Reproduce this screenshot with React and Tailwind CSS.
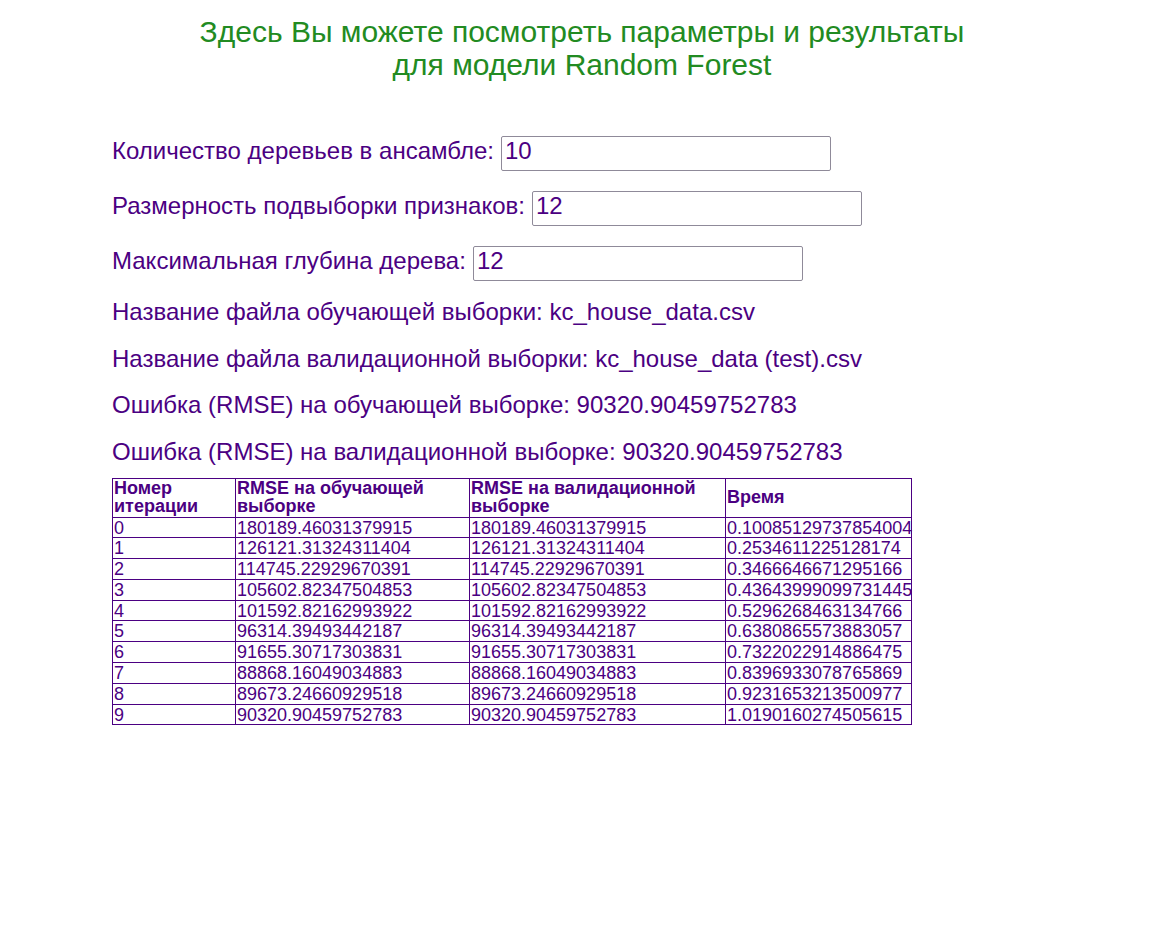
import React from "react";

const rows = [
  ["0", "180189.46031379915", "180189.46031379915", "0.10085129737854004"],
  ["1", "126121.31324311404", "126121.31324311404", "0.2534611225128174"],
  ["2", "114745.22929670391", "114745.22929670391", "0.3466646671295166"],
  ["3", "105602.82347504853", "105602.82347504853", "0.43643999099731445"],
  ["4", "101592.82162993922", "101592.82162993922", "0.5296268463134766"],
  ["5", "96314.39493442187", "96314.39493442187", "0.6380865573883057"],
  ["6", "91655.30717303831", "91655.30717303831", "0.7322022914886475"],
  ["7", "88868.16049034883", "88868.16049034883", "0.8396933078765869"],
  ["8", "89673.24660929518", "89673.24660929518", "0.9231653213500977"],
  ["9", "90320.90459752783", "90320.90459752783", "1.0190160274505615"],
];

function ParamRow({ label, value, mt }) {
  return (
    <div className={"flex items-center h-[35px] " + mt}>
      <span className="leading-[28px] pb-[4px]">{label}</span>
      <input
        type="text"
        defaultValue={value}
        className="ml-[7px] w-[330px] h-[35px] px-[3px] pb-[4px] border border-[#8f8a99] rounded-[2px] text-[24px] text-[#4b0082] bg-white outline-none"
      />
    </div>
  );
}

export default function App() {
  return (
    <div className="min-h-screen bg-white font-['Liberation_Sans',Arial,sans-serif] text-[#4b0082]">
      <h1 className="pt-[14.5px] text-center text-[30px] leading-[33.5px] text-[#228b22] font-normal">
        Здесь Вы можете посмотреть параметры и результаты
        <br />
        для модели Random Forest
      </h1>

      <div className="pl-[112px] text-[24px]">
        <ParamRow label="Количество деревьев в ансамбле:" value="10" mt="mt-[54px]" />
        <ParamRow label="Размерность подвыборки признаков:" value="12" mt="mt-[20px]" />
        <ParamRow label="Максимальная глубина дерева:" value="12" mt="mt-[20px]" />

        <p className="mt-[17.5px] leading-[28px]">Название файла обучающей выборки: kc_house_data.csv</p>
        <p className="mt-[18.5px] leading-[28px]">Название файла валидационной выборки: kc_house_data (test).csv</p>
        <p className="mt-[18.5px] leading-[28px]">Ошибка (RMSE) на обучающей выборке: 90320.90459752783</p>
        <p className="mt-[18.5px] leading-[28px]">Ошибка (RMSE) на валидационной выборке: 90320.90459752783</p>

        <table className="mt-[12px] w-[799px] table-fixed border-collapse border border-[#4b0082] text-[18px] leading-[18px]">
          <colgroup>
            <col className="w-[123px]" />
            <col className="w-[234px]" />
            <col className="w-[256px]" />
            <col className="w-[186px]" />
          </colgroup>
          <thead>
            <tr>
              {["Номер итерации", "RMSE на обучающей выборке", "RMSE на валидационной выборке", "Время"].map((h) => (
                <th key={h} className="border border-[#4b0082] px-[1px] pt-0 pb-[2px] text-left align-middle font-bold">
                  {h}
                </th>
              ))}
            </tr>
          </thead>
          <tbody>
            {rows.map((r) => (
              <tr key={r[0]}>
                {r.map((c, i) => (
                  <td key={i} className="border border-[#4b0082] px-[1px] pt-[1px] pb-[0.8px] whitespace-nowrap overflow-visible">
                    {c}
                  </td>
                ))}
              </tr>
            ))}
          </tbody>
        </table>
      </div>
    </div>
  );
}
